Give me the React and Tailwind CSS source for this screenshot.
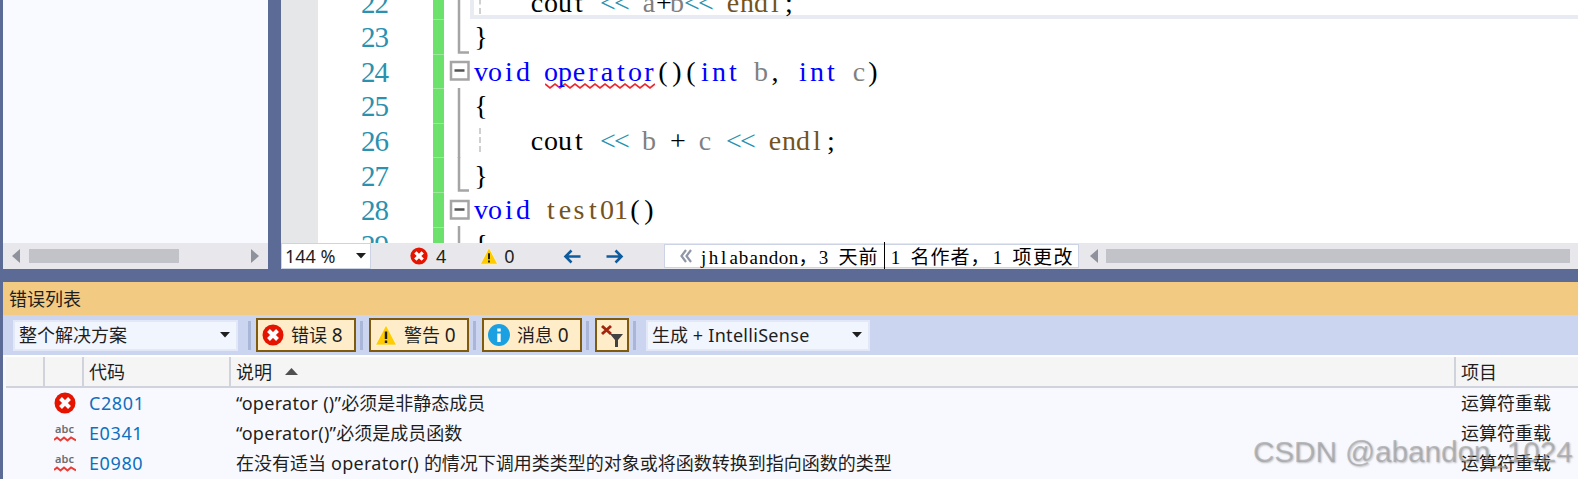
const UI_FONT = "font-['Noto_Sans','Noto_Sans_CJK_SC',sans-serif]";

const CODE = [
  { n: 22, fold: 'line', active: true, guide: true, parts: [['    cout ', 'text-black'], ['<<', 'text-[#2b91af]'], [' a', 'text-[#808080]'], ['+', 'text-black'], ['b', 'text-[#808080]'], ['<<', 'text-[#2b91af]'], [' endl', 'text-[#74531f]'], [';', 'text-black']] },
  { n: 23, fold: 'end', parts: [['}', 'text-black']] },
  { n: 24, fold: 'box', squiggle: true, parts: [['void ', 'text-[#0000ff]'], ['operator', 'text-[#0000ff]'], ['()(', 'text-black'], ['int', 'text-[#0000ff]'], [' b', 'text-[#808080]'], [', ', 'text-black'], ['int', 'text-[#0000ff]'], [' c', 'text-[#808080]'], [')', 'text-black']] },
  { n: 25, fold: 'line', parts: [['{', 'text-black']] },
  { n: 26, fold: 'line', guide: true, parts: [['    cout ', 'text-black'], ['<<', 'text-[#2b91af]'], [' b ', 'text-[#808080]'], ['+', 'text-black'], [' c ', 'text-[#808080]'], ['<<', 'text-[#2b91af]'], [' endl', 'text-[#74531f]'], [';', 'text-black']] },
  { n: 27, fold: 'end', parts: [['}', 'text-black']] },
  { n: 28, fold: 'box', parts: [['void ', 'text-[#0000ff]'], ['test01', 'text-[#74531f]'], ['()', 'text-black']] },
  { n: 29, fold: 'line', parts: [['{', 'text-black']] },
];

const ERRORS = [
  { code: 'C2801', text: '“operator ()”必须是非静态成员', kind: 'error' },
  { code: 'E0341', text: '“operator()”必须是成员函数', kind: 'abc' },
  { code: 'E0980', text: '在没有适当 operator() 的情况下调用类类型的对象或将函数转换到指向函数的类型', kind: 'abc' },
];

// the editor font is a fixed-pitch serif, so each char sits in its own cell
function Cells({ text, className }) {
  return [...text].map((ch, i) => (
    <span key={i} className={`inline-block whitespace-pre text-center ${className}`}>{ch}</span>
  ));
}

// latin runs come out a bit narrow next to the CJK text
function Mixed({ text }) {
  return text.split(/([\x20-\x7e“”]+)/).map((run, i) =>
    i % 2 ? <span key={i} className="tracking-[0.3px]">{run}</span> : run
  );
}

function ErrorIcon({ size = 22 }) {
  return (
    <svg width={size} height={size} viewBox="0 0 22 22" className="shrink-0">
      <circle cx="11" cy="11" r="10.5" fill="#e51400" />
      <path d="M6.5 6.5 15.5 15.5M15.5 6.5 6.5 15.5" stroke="#fff" strokeWidth="4" />
    </svg>
  );
}

function WarnIcon({ size = 22 }) {
  return (
    <svg width={size} height={size} viewBox="0 0 22 22" className="shrink-0">
      <path d="M11 1 21.5 21H.5Z" fill="#ffcc00" stroke="#fff" strokeWidth="0.6" />
      <path d="M11 7.5V15M11 16.5V19" stroke="#1e1e1e" strokeWidth="2.4" />
    </svg>
  );
}

function InfoIcon() {
  return (
    <svg width="22" height="22" viewBox="0 0 22 22" className="shrink-0">
      <circle cx="11" cy="11" r="11" fill="#1ba1e2" />
      <path d="M11 4.5V7.5M11 9.5V18" stroke="#fff" strokeWidth="3.4" />
    </svg>
  );
}

function FoldMark({ type }) {
  return (
    <svg width="30" height="35" viewBox="0 0 30 35" className="shrink-0">
      {type === 'line' && <path d="M15 0V35" stroke="#a5a5a5" strokeWidth="2.5" />}
      {type === 'end' && <path d="M15 0V33.5H25" stroke="#a5a5a5" strokeWidth="2.5" fill="none" />}
      {type === 'box' && (
        <>
          <rect x="7" y="9" width="17.5" height="17.5" fill="#fff" stroke="#a5a5a5" strokeWidth="2.5" />
          <path d="M10.5 17.5H20.5" stroke="#555" strokeWidth="2.5" />
        </>
      )}
    </svg>
  );
}

function Squiggle() {
  const pts = Array.from({ length: 23 }, (_, i) => `${i * 5} ${i % 2 ? 6 : 2}`).join(' ');
  return (
    <svg width="110" height="8" viewBox="0 0 110 8" className="absolute left-[71px] top-[28px]">
      <path d={`M${pts}`} fill="none" stroke="#f0262e" strokeWidth="1.7" />
    </svg>
  );
}

function CodeRow({ row }) {
  return (
    <div className="flex h-[34.6px] shrink-0 items-center">
      <div className="w-[70px] shrink-0 pt-[3px] text-right font-['Liberation_Serif',serif] text-[29px] leading-none tracking-[-1px] text-[#2b91af]">{row.n}</div>
      <div className="h-full w-[45px] shrink-0" />
      <div className="h-full w-[11px] shrink-0 border-t border-[#9aea9a] bg-[#6ce26c]" />
      <FoldMark type={row.fold} />
      <div className="relative flex h-full flex-1 items-center whitespace-pre font-['Liberation_Serif',serif] text-[28px] leading-none">
        {row.active && <div className="absolute inset-y-0 -left-[4px] right-0 border-b-4 border-l-4 border-[#e9ebf3]" />}
        {row.guide && <div className="absolute inset-y-[5px] left-[5px] border-l-2 border-dashed border-[#cfcfcf]" />}
        {row.squiggle && <Squiggle />}
        <span className="relative pt-[2px]">
          {row.parts.map(([txt, color], i) => (
            <Cells key={i} text={txt} className={`w-[14px] ${color}`} />
          ))}
        </span>
      </div>
    </div>
  );
}

function ScrollArrow({ dir }) {
  return (
    <svg width="8" height="14" viewBox="0 0 8 14" className="shrink-0">
      <path d={dir === 'left' ? 'M8 0V14L0 7Z' : 'M0 0V14L8 7Z'} fill="#8f929c" />
    </svg>
  );
}

function Grip() {
  return <div className="h-[29px] w-[3px] shrink-0 bg-[#a9b6d8]" />;
}

function FilterBtn({ icon, label, count }) {
  return (
    <div className="flex h-[34px] w-[100px] shrink-0 items-center border-2 border-[#7f5a0f] bg-[#ffedc9] pl-[4px]">
      {icon}
      <span className="ml-[7px] whitespace-pre text-[18px] leading-none">{label} <span className="text-[19px]">{count}</span></span>
    </div>
  );
}

function ComboCaret() {
  return (
    <svg width="10" height="6" viewBox="0 0 10 6" className="shrink-0">
      <path d="M0 0H10L5 5.5Z" fill="#1e1e1e" />
    </svg>
  );
}

function AbcIcon() {
  return (
    <div className="relative flex h-[22px] w-[22px] flex-col items-center">
      <span className="font-['Noto_Sans',sans-serif] text-[11px] font-semibold leading-[14px] text-[#6d6d70]">abc</span>
      <svg width="22" height="6" viewBox="0 0 22 6">
        <path d="M0 4 3 1.5 6.5 4.5 10 1.5 13.5 4.5 17 1.5 22 4.5" fill="none" stroke="#ee3a34" strokeWidth="2" />
      </svg>
    </div>
  );
}

const GRID = 'grid grid-cols-[39px_39px_147px_1225px_1fr]';
const LENS_CELL = "w-[10px] font-['Liberation_Serif',serif] text-[19px]";

export default function App() {
  return (
    <div className={`relative flex h-[479px] w-[1578px] flex-col overflow-hidden bg-[#5c6b96] pl-[3px] text-[#1e1e1e] ${UI_FONT}`}>
      {/* top: solution panel + editor */}
      <div className="flex h-[269px] shrink-0">
        <div className="flex w-[265px] shrink-0 flex-col">
          <div className="flex-1 bg-[#f8faff]" />
          <div className="flex h-[26px] items-center bg-[#e8e8ec] pl-[9px]">
            <ScrollArrow dir="left" />
            <div className="ml-[9px] h-[14px] w-[150px] bg-[#c2c3c9]" />
            <div className="ml-[72px]"><ScrollArrow dir="right" /></div>
          </div>
        </div>

        <div className="ml-[13px] flex min-w-0 flex-1 flex-col">
          <div className="flex h-[243px] shrink-0 overflow-hidden bg-white">
            <div className="w-[37px] shrink-0 bg-[#e6e7e8]" />
            <div className="-mt-[15.6px] flex min-w-0 flex-1 flex-col">
              {CODE.map((row) => <CodeRow key={row.n} row={row} />)}
            </div>
          </div>

          {/* editor status strip */}
          <div className="flex h-[26px] items-center bg-[#e8e8ec]">
            <div className="flex h-full w-[90px] shrink-0 items-center justify-between border border-[#ccd3e4] bg-white pl-[3px] pr-[4px] text-[18px] leading-none">
              144 %
              <ComboCaret />
            </div>
            <div className="ml-[39px]"><ErrorIcon size={18} /></div>
            <span className="ml-[8px] text-[18px] leading-none">4</span>
            <div className="ml-[34px]"><WarnIcon size={18} /></div>
            <span className="ml-[6px] text-[18px] leading-none">0</span>
            <svg width="18" height="15" viewBox="0 0 18 15" className="ml-[48px]">
              <path d="M17.5 7.5H2.5M8.5 1.5 2.5 7.5 8.5 13.5" fill="none" stroke="#0e5c9e" strokeWidth="2.6" />
            </svg>
            <svg width="18" height="15" viewBox="0 0 18 15" className="ml-[25px]">
              <path d="M.5 7.5H15.5M9.5 1.5 15.5 7.5 9.5 13.5" fill="none" stroke="#0e5c9e" strokeWidth="2.6" />
            </svg>
            <div className="ml-[40px] flex h-[24px] w-[415px] shrink-0 items-center border border-[#ccd3e4] bg-white pl-[15px] font-['Noto_Sans_CJK_SC',sans-serif] text-[19px] leading-none text-black">
              <svg width="12" height="14" viewBox="0 0 12 14" className="shrink-0">
                <path d="M6 1 1.5 7 6 13M11 1 6.5 7 11 13" fill="none" stroke="#8f96a8" strokeWidth="2.2" />
              </svg>
              <span className="ml-[7px] whitespace-pre">
                <Cells text="jhlabandon" className={LENS_CELL} />
                <span className="inline-block w-[20px]">，</span>
                <Cells text="3 " className={LENS_CELL} />
                <span className="inline-block w-[40px] tracking-[1px]">天前</span>
                <span className="ml-[5px] mr-[6px] border-l border-black" />
                <Cells text="1 " className={LENS_CELL} />
                <span className="inline-block w-[60px] tracking-[1px]">名作者</span>
                <span className="inline-block w-[22px]">，</span>
                <Cells text="1 " className={LENS_CELL} />
                <span className="tracking-[1.5px]">项更改</span>
              </span>
            </div>
            <div className="ml-[11px]"><ScrollArrow dir="left" /></div>
            <div className="ml-[8px] h-[14px] w-[464px] bg-[#c2c3c9]" />
          </div>
        </div>
      </div>

      {/* error list */}
      <div className="mt-[13px] flex min-h-0 flex-1 flex-col bg-[#f8f9fe]">
        <div className="flex h-[33px] shrink-0 items-center bg-[#f3ca82] pl-[6px] text-[18px] leading-none">错误列表</div>

        <div className="flex h-[40px] shrink-0 items-center bg-[#ccd5f0] pl-[10px]">
          <div className="flex h-[31px] w-[225px] shrink-0 items-center justify-between border-2 border-[#e2e8f8] bg-[#f1f5fe] pl-[4px] pr-[6px] text-[18px] leading-none">
            整个解决方案
            <ComboCaret />
          </div>
          <div className="ml-[10px]"><Grip /></div>
          <div className="ml-[5px]"><FilterBtn icon={<ErrorIcon />} label="错误" count="8" /></div>
          <div className="ml-[4px]"><Grip /></div>
          <div className="ml-[6px]"><FilterBtn icon={<WarnIcon />} label="警告" count="0" /></div>
          <div className="ml-[4px]"><Grip /></div>
          <div className="ml-[6px]"><FilterBtn icon={<InfoIcon />} label="消息" count="0" /></div>
          <div className="ml-[4px]"><Grip /></div>
          <div className="ml-[6px] flex h-[34px] w-[34px] shrink-0 items-center justify-center border-2 border-[#7f5a0f] bg-[#ffedc9]">
            <svg width="24" height="24" viewBox="0 0 24 24">
              <path d="M2 3 11 11M11 3 2 11" stroke="#a1260d" strokeWidth="3" />
              <path d="M10 11H23L18 17V24H15V17Z" fill="#424242" />
            </svg>
          </div>
          <div className="ml-[4px]"><Grip /></div>
          <div className="ml-[10px] flex h-[31px] w-[224px] shrink-0 items-center justify-between border-2 border-[#e2e8f8] bg-[#f1f5fe] pl-[4px] pr-[6px] text-[18px] leading-none">
            <span>生成 <span className="tracking-[0.3px]">+ IntelliSense</span></span>
            <ComboCaret />
          </div>
        </div>

        <div className="h-[2px] shrink-0 bg-white" />

        <div className="pl-[3px]">
          <div className={`${GRID} h-[31px] border-b-2 border-[#d0d2dc] bg-[#f5f5f5] text-[18px] leading-none`}>
            <div className="border-r-2 border-[#d0d2dc]" />
            <div className="border-r-2 border-[#d0d2dc]" />
            <div className="flex items-center border-r-2 border-[#d0d2dc] pl-[5px]">代码</div>
            <div className="flex items-center border-r-2 border-[#d0d2dc] pl-[5px]">
              说明
              <svg width="13" height="7" viewBox="0 0 13 7" className="ml-[13px]"><path d="M0 7H13L6.5 0Z" fill="#505050" /></svg>
            </div>
            <div className="flex items-center pl-[5px]">项目</div>
          </div>
          {ERRORS.map((err) => (
            <div key={err.code} className={`${GRID} h-[30px] items-center text-[18px] leading-none`}>
              <div />
              <div className="flex justify-center">{err.kind === 'error' ? <ErrorIcon /> : <AbcIcon />}</div>
              <div className="pl-[5px] tracking-[0.6px] text-[#0e70c0]">{err.code}</div>
              <div className="pl-[5px]"><Mixed text={err.text} /></div>
              <div className="pl-[5px]">运算符重载</div>
            </div>
          ))}
        </div>
      </div>

      <div className="absolute left-[1253px] top-[434px] whitespace-pre font-['Liberation_Sans',sans-serif] text-[29.6px] leading-[36px] text-[#9a9a9a]/60 [text-shadow:1px_1px_2px_rgba(0,0,0,0.25)]">
        CSDN @abandon_1024
      </div>
    </div>
  );
}
